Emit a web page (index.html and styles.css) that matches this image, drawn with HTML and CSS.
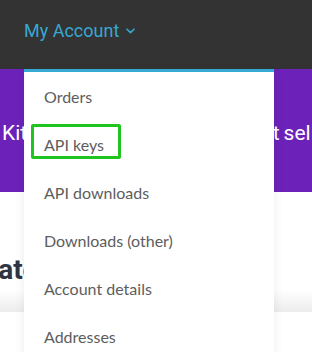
FILE: index.html
```html
<!DOCTYPE html>
<html lang="en">
<head>
  <meta charset="UTF-8" />
  <meta name="viewport" content="width=device-width, initial-scale=1.0"/>
  <title>My Account</title>
  <link rel="stylesheet" href="styles.css">
</head>
<body>
  <header class="topbar">
    <nav class="account-nav">
      <a href="#" class="account-toggle">
        My Account
        <svg class="chevron" width="9" height="6" viewBox="0 0 9 6" aria-hidden="true">
          <path d="M1 1.2 L4.5 4.6 L8 1.2" fill="none" stroke="currentColor" stroke-width="1.6" stroke-linecap="round" stroke-linejoin="round"/>
        </svg>
      </a>
      <ul class="account-menu">
        <li><a href="#">Orders</a></li>
        <li class="is-marked"><a href="#">API keys</a><span class="marker"></span></li>
        <li><a href="#">API downloads</a></li>
        <li><a href="#">Downloads (other)</a></li>
        <li><a href="#">Account details</a></li>
        <li><a href="#">Addresses</a></li>
      </ul>
    </nav>
  </header>

  <section class="hero">
    <p class="hero-text">Kits and tools that let you start selling</p>
  </section>

  <section class="intro">
    <h2 class="intro-title">Latest updates</h2>
  </section>

  <div class="fade-band"></div>
  <div class="page-rest"></div>
</body>
</html>
```

FILE: styles.css
```css
body {
  margin: 0;
  padding: 0;
  font-family: 'Lato', sans-serif;
  background: #fff;
  overflow: hidden;
}

.topbar {
  background: #333333;
  height: 69px;
  position: relative;
  z-index: 2;
}

.account-nav {
  padding-left: 24px;
  height: 100%;
  display: flex;
  align-items: center;
}

.account-toggle {
  font-family: 'Roboto', sans-serif;
  font-size: 18px;
  color: #37a8d2;
  text-decoration: none;
  display: flex;
  align-items: center;
  gap: 7px;
  margin-top: -9px;
}

.chevron {
  margin-top: 2px;
}

.account-menu {
  position: absolute;
  top: 69px;
  left: 24px;
  width: 250px;
  margin: 0;
  padding: 0;
  list-style: none;
  background: #fff;
  border-top: 3px solid #36a9d3;
  box-shadow: 0 3px 10px rgba(0, 0, 0, 0.08);
}

.account-menu li {
  position: relative;
  height: 48px;
  display: flex;
  align-items: center;
  padding-left: 20px;
}

.account-menu a {
  font-size: 16px;
  color: #5d5d5d;
  text-decoration: none;
}

.marker {
  position: absolute;
  left: 7px;
  top: 4px;
  width: 84px;
  height: 29px;
  border: 3px solid #1fc41f;
  border-radius: 2px;
  pointer-events: none;
}

.hero {
  background: #6c22b9;
  height: 123px;
  display: flex;
  align-items: center;
}

.hero-text {
  margin: 0 0 0 2px;
  font-family: 'Roboto', sans-serif;
  font-size: 21px;
  color: #fff;
  white-space: nowrap;
  word-spacing: -1.3px;
  padding-top: 4px;
}

.intro {
  height: 98px;
  display: flex;
  align-items: flex-end;
}

.intro-title {
  margin: 0 0 4px -17px;
  font-family: 'Roboto', sans-serif;
  font-weight: 700;
  font-size: 28px;
  color: #2f3542;
  white-space: nowrap;
}

.fade-band {
  height: 22px;
  background: linear-gradient(#fff, #ececec);
}

.page-rest {
  height: 40px;
  background: #fff;
}
```
